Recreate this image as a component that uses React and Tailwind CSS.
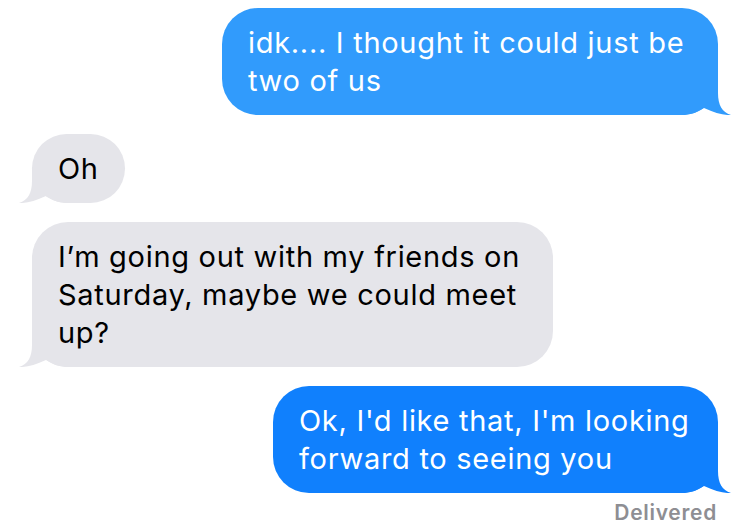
import React from 'react';

const font = { fontFamily: 'Inter, "Liberation Sans", sans-serif' };

const Tail = ({ side, color }) => (
    <svg
        width="50"
        height="36"
        viewBox="0 0 50 36"
        className={side === 'right' ? 'absolute bottom-0 right-[-14px]' : 'absolute bottom-0 left-[-14px] scale-x-[-1]'}
    >
        <path
            d="M0 0 H36 V14 C36 26 40 33 49 36 C42 36.5 33 34 22 29 C14 34 8 36 0 36 Z"
            fill={color}
        />
    </svg>
);

const Bubble = ({ side, lines, width, bg, text }) => (
    <div className={`flex ${side === 'right' ? 'justify-end' : 'justify-start'}`}>
        <div
            className={`relative rounded-[36px] py-[15.5px] px-[26px] text-[29px] leading-[38px] tracking-[0.7px] whitespace-nowrap ${text} ${width}`}
            style={{ backgroundColor: bg }}
        >
            <Tail side={side} color={bg} />
            {lines.map((l, i) => (
                <div key={i} className="relative">{l}</div>
            ))}
        </div>
    </div>
);

export default function App() {
    return (
        <div className="w-[750px] h-[529px] bg-white overflow-hidden pt-[8px] px-[32px]" style={font}>
            <div className="flex flex-col gap-[19px]">
                <Bubble
                    side="right"
                    lines={['idk.... I thought it could just be', 'two of us']}
                    width="w-[496px]"
                    bg="#319bfc"
                    text="text-white"
                />
                <Bubble side="left" lines={['Oh']} width="" bg="#e5e5ea" text="text-black" />
                <Bubble
                    side="left"
                    lines={['I’m going out with my friends on', 'Saturday, maybe we could meet', 'up?']}
                    width="w-[521px]"
                    bg="#e5e5ea"
                    text="text-black"
                />
                <Bubble
                    side="right"
                    lines={["Ok, I'd like that, I'm looking", 'forward to seeing you']}
                    width="w-[445px]"
                    bg="#1080fd"
                    text="text-white"
                />
            </div>
            <div className="mt-[7px] text-right pr-[1px] text-[21px] leading-[26px] tracking-[0.7px] font-semibold text-[#8e8e93]">
                Delivered
            </div>
        </div>
    );
}
